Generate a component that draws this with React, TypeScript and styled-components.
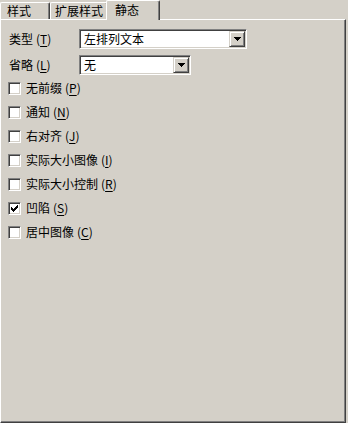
import React from 'react';
import styled, { createGlobalStyle } from 'styled-components';

const Global = createGlobalStyle`
  html, body { margin: 0; padding: 0; background: #d4d0c8; }
  body {
    font-family: "Noto Sans CJK SC", "Liberation Sans", sans-serif;
    font-size: 12px;
    color: #000;
  }
`;

const Window = styled.div`
  width: 348px;
  height: 423px;
  display: flex;
  flex-direction: column;
  overflow: hidden;
`;

const TabStrip = styled.div`
  display: flex;
  align-items: flex-end;
  height: 19px;
  position: relative;
  z-index: 1;
`;

const Tab = styled.div<{ $active?: boolean; $w: number; $pad: number }>`
  box-sizing: border-box;
  width: ${(p) => p.$w}px;
  height: ${(p) => (p.$active ? 20 : 17)}px;
  margin-bottom: ${(p) => (p.$active ? -1 : 0)}px;
  margin-left: ${(p) => (p.$active ? -2 : 0)}px;
  padding-left: ${(p) => p.$pad}px;
  padding-bottom: ${(p) => (p.$active ? 2 : 0)}px;
  background: #d4d0c8;
  border-top: 1px solid #fff;
  border-left: 1px solid #fff;
  border-right: 1px solid #404040;
  box-shadow: inset -1px 0 #808080;
  border-top-left-radius: 2px;
  border-top-right-radius: 2px;
  display: flex;
  align-items: center;
  line-height: 1;
  white-space: nowrap;
`;

const Panel = styled.div`
  box-sizing: border-box;
  width: 346px;
  flex: 1;
  border-top: 1px solid #fff;
  border-left: 1px solid #fff;
  border-right: 1px solid #404040;
  border-bottom: 1px solid #404040;
  box-shadow: inset -1px -1px #808080;
  padding: 9px 0 0 7px;
  display: flex;
  flex-direction: column;
`;

const FieldRow = styled.div<{ $gap?: number }>`
  display: flex;
  align-items: center;
  height: 20px;
  margin-top: ${(p) => p.$gap ?? 0}px;
`;

const Label = styled.div`
  width: 70px;
  padding-left: 1px;
  line-height: 1;
  white-space: nowrap;
`;

const Mnemonic = styled.span`
  margin-left: 3px;
`;

const Key = styled.span`
  text-decoration: underline;
  text-decoration-thickness: 1px;
  text-underline-offset: 2px;
`;

const Combo = styled.div<{ $w: number }>`
  box-sizing: border-box;
  width: ${(p) => p.$w}px;
  height: 20px;
  background: #fff;
  border-top: 1px solid #808080;
  border-left: 1px solid #808080;
  border-bottom: 1px solid #fff;
  border-right: 1px solid #fff;
  box-shadow: inset 1px 1px #404040, inset -1px -1px #d4d0c8;
  padding: 1px;
  display: flex;
  align-items: stretch;
`;

const ComboText = styled.div`
  flex: 1;
  padding-left: 3px;
  display: flex;
  align-items: center;
  line-height: 1;
  white-space: nowrap;
`;

const DropButton = styled.div`
  box-sizing: border-box;
  width: 16px;
  height: 16px;
  background: #d4d0c8;
  border-top: 1px solid #d4d0c8;
  border-left: 1px solid #d4d0c8;
  border-right: 1px solid #404040;
  border-bottom: 1px solid #404040;
  box-shadow: inset 1px 1px #fff, inset -1px -1px #808080;
  display: flex;
  align-items: center;
  justify-content: center;
`;

const CheckList = styled.div`
  display: flex;
  flex-direction: column;
  gap: 8px;
  margin-top: 5px;
`;

const CheckRow = styled.div`
  display: flex;
  align-items: center;
  height: 16px;
  gap: 5px;
`;

const Box = styled.div`
  box-sizing: border-box;
  width: 13px;
  height: 13px;
  background: #fff;
  border-top: 1px solid #808080;
  border-left: 1px solid #808080;
  border-bottom: 1px solid #fff;
  border-right: 1px solid #fff;
  box-shadow: inset 1px 1px #404040, inset -1px -1px #d4d0c8;
  display: flex;
  align-items: center;
  justify-content: center;
`;

const CheckText = styled.div`
  line-height: 1;
  white-space: nowrap;
`;

const Arrow = () => (
  <svg width="7" height="4" viewBox="0 0 7 4" shapeRendering="crispEdges">
    <polygon points="0,0 7,0 3.5,4" fill="#000" />
  </svg>
);

const CheckMark = () => (
  <svg width="7" height="7" viewBox="0 0 7 7" shapeRendering="crispEdges">
    <rect x="6" y="0" width="1" height="3" fill="#000" />
    <rect x="5" y="1" width="1" height="3" fill="#000" />
    <rect x="4" y="2" width="1" height="3" fill="#000" />
    <rect x="3" y="3" width="1" height="3" fill="#000" />
    <rect x="2" y="4" width="1" height="3" fill="#000" />
    <rect x="1" y="3" width="1" height="3" fill="#000" />
    <rect x="0" y="2" width="1" height="3" fill="#000" />
  </svg>
);

const Hotkey = ({ k }: { k: string }) => (
  <Mnemonic>
    (<Key>{k}</Key>)
  </Mnemonic>
);

const checks: { label: string; key: string; checked?: boolean }[] = [
  { label: '无前缀', key: 'P' },
  { label: '通知', key: 'N' },
  { label: '右对齐', key: 'J' },
  { label: '实际大小图像', key: 'I' },
  { label: '实际大小控制', key: 'R' },
  { label: '凹陷', key: 'S', checked: true },
  { label: '居中图像', key: 'C' },
];

export default function App() {
  return (
    <Window>
      <Global />
      <TabStrip>
        <Tab $w={50} $pad={6}>样式</Tab>
        <Tab $w={58} $pad={4}>扩展样式</Tab>
        <Tab $w={54} $pad={8} $active>静态</Tab>
      </TabStrip>
      <Panel>
        <FieldRow>
          <Label>类型<Hotkey k="T" /></Label>
          <Combo $w={168}>
            <ComboText>左排列文本</ComboText>
            <DropButton><Arrow /></DropButton>
          </Combo>
        </FieldRow>
        <FieldRow $gap={6}>
          <Label>省略<Hotkey k="L" /></Label>
          <Combo $w={112}>
            <ComboText>无</ComboText>
            <DropButton><Arrow /></DropButton>
          </Combo>
        </FieldRow>
        <CheckList>
          {checks.map((c) => (
            <CheckRow key={c.key}>
              <Box>{c.checked && <CheckMark />}</Box>
              <CheckText>
                {c.label}
                <Hotkey k={c.key} />
              </CheckText>
            </CheckRow>
          ))}
        </CheckList>
      </Panel>
    </Window>
  );
}
